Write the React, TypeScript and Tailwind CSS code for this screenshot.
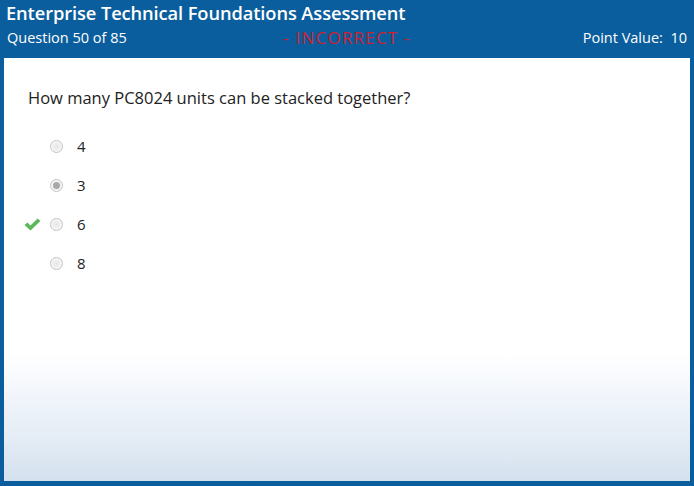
import React from "react";

const options = [
  { label: "4", selected: false, correct: false },
  { label: "3", selected: true, correct: false },
  { label: "6", selected: false, correct: true },
  { label: "8", selected: false, correct: false },
];

function Radio({ selected }: { selected: boolean }) {
  return (
    <span className="flex size-[13px] items-center justify-center rounded-full border border-[#c4c4c4] bg-[radial-gradient(circle,#e6e6e6_0%,#f6f6f6_70%)]">
      {selected && <span className="size-[7px] rounded-full bg-[#a9a9a9]" />}
    </span>
  );
}

function Check() {
  return (
    <svg width="17" height="13" viewBox="0 0 17 13">
      <path d="M0.5 7 L3.5 4.5 L6.5 7.5 L13.5 0.5 L16.5 3 L6.5 12.5 Z" fill="#5cb85c" />
    </svg>
  );
}

export default function App() {
  return (
    <div className="flex h-[486px] w-[694px] flex-col bg-[#0b5e9d] font-['Open_Sans',sans-serif]">
      <header className="flex h-[58px] flex-col px-[6px] text-white">
        <h1 className="text-[18.3px] leading-[25px] font-semibold tracking-[-0.1px]">
          Enterprise Technical Foundations Assessment
        </h1>
        <div className="flex items-center pt-[2px] text-[14.5px] leading-[22px]">
          <span className="w-[270px] pl-[1px]">Question 50 of 85</span>
          <span className="w-[142px] text-center text-[17px] tracking-[1.2px] text-[#d0202e]">- INCORRECT -</span>
          <span className="ml-auto pr-[1px]">Point Value:&nbsp; 10</span>
        </div>
      </header>

      <main className="mx-[4px] mb-[5px] flex-1 bg-[linear-gradient(to_bottom,#ffffff_70%,#f1f5fb_80%,#e4ecf5_90%,#d4e1ef_100%)] pt-[28px]">
        <p className="pl-[24px] text-[16.5px] leading-[24px] text-[#222]">
          How many PC8024 units can be stacked together?
        </p>
        <ul className="mt-[25px] flex flex-col gap-[17px]">
          {options.map((o) => (
            <li key={o.label} className="flex h-[22px] items-center">
              <span className="flex w-[46px] justify-end pr-[9px]">{o.correct && <Check />}</span>
              <Radio selected={o.selected} />
              <span className="pl-[14px] text-[15px] text-[#222]">{o.label}</span>
            </li>
          ))}
        </ul>
      </main>
    </div>
  );
}
